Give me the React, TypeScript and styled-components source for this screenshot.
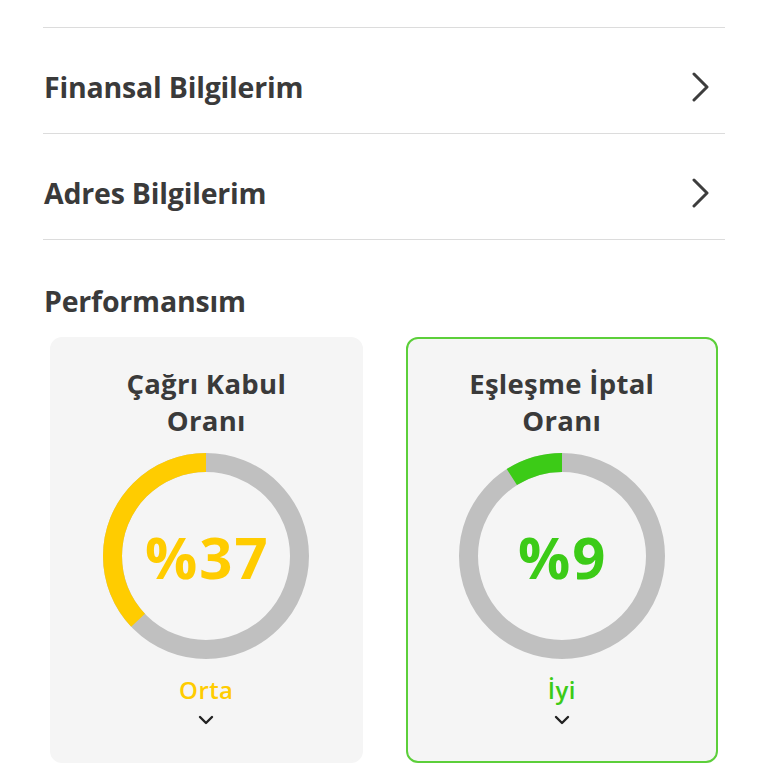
import styled, { createGlobalStyle } from "styled-components";

const GlobalStyle = createGlobalStyle`
  html, body {
    margin: 0;
    padding: 0;
    background: #ffffff;
  }
  body {
    font-family: "Open Sans", "Liberation Sans", sans-serif;
    color: #3a3a3a;
  }
`;

const Page = styled.div`
  width: 768px;
  height: 768px;
  overflow: hidden;
  box-sizing: border-box;
  padding: 27px 43px 0;
`;

const Menu = styled.ul`
  list-style: none;
  margin: 0;
  padding: 0;
  border-top: 1.5px solid #dcdcdc;
`;

const MenuRow = styled.li`
  height: 106px;
  box-sizing: border-box;
  display: flex;
  align-items: center;
  justify-content: space-between;
  border-bottom: 1.5px solid #dcdcdc;
  padding: 13px 14px 0 1px;
  cursor: pointer;
`;

const RowLabel = styled.span`
  font-size: 28.5px;
  font-weight: 700;
  letter-spacing: -0.2px;
  color: #3a3a3a;
`;

const SectionTitle = styled.h2`
  margin: 0;
  padding: 41px 0 0 1px;
  height: 56px;
  font-size: 28.5px;
  font-weight: 700;
  letter-spacing: -0.2px;
  color: #3a3a3a;
  line-height: 40px;
  box-sizing: content-box;
`;

const Cards = styled.div`
  display: grid;
  grid-template-columns: 1fr 1fr;
  gap: 43px;
  padding: 0 7px;
`;

const Card = styled.div<{ $active?: boolean }>`
  height: 426px;
  box-sizing: border-box;
  border-radius: 12px;
  background: #f5f5f5;
  border: 2px solid ${(p) => (p.$active ? "#5ccf3a" : "#f5f5f5")};
  display: flex;
  flex-direction: column;
  align-items: center;
  padding-top: 26px;
`;

const CardTitle = styled.div`
  font-size: 27.5px;
  font-weight: 700;
  line-height: 37px;
  letter-spacing: 0.3px;
  text-align: center;
  color: #3a3a3a;
`;

const Gauge = styled.div`
  position: relative;
  width: 206px;
  height: 206px;
  margin-top: 14px;
`;

const GaugeValue = styled.div<{ $color: string }>`
  position: absolute;
  inset: 0;
  display: flex;
  align-items: center;
  justify-content: center;
  padding-left: 2px;
  font-size: 58px;
  font-weight: 700;
  letter-spacing: 2px;
  color: ${(p) => p.$color};
`;

const Level = styled.div<{ $color: string }>`
  margin-top: 16px;
  font-size: 24px;
  font-weight: 600;
  line-height: 30px;
  letter-spacing: 0.4px;
  color: ${(p) => p.$color};
`;

const Toggle = styled.div`
  margin-top: 10px;
  display: flex;
`;

const ChevronRight = () => (
  <svg width="20" height="30" viewBox="0 0 20 30" fill="none">
    <path
      d="M3 2 L16 15 L3 28"
      stroke="#3d3d3d"
      strokeWidth="3"
      strokeLinecap="round"
      strokeLinejoin="round"
    />
  </svg>
);

const ChevronDown = () => (
  <svg width="16" height="10" viewBox="0 0 16 10" fill="none">
    <path
      d="M2 2 L8 8 L14 2"
      stroke="#222"
      strokeWidth="2.4"
      strokeLinecap="round"
      strokeLinejoin="round"
    />
  </svg>
);

const RADIUS = 93.5;
const CIRC = 2 * Math.PI * RADIUS;

function Donut({ value, color }: { value: number; color: string }) {
  const filled = (value / 100) * CIRC;
  return (
    <svg width="206" height="206" viewBox="0 0 206 206">
      <circle cx="103" cy="103" r={RADIUS} fill="none" stroke="#c0c0c0" strokeWidth="19" />
      <circle
        cx="103"
        cy="103"
        r={RADIUS}
        fill="none"
        stroke={color}
        strokeWidth="19"
        strokeDasharray={`${filled} ${CIRC}`}
        transform="scale(-1,1) translate(-206,0) rotate(-90 103 103)"
      />
    </svg>
  );
}

const metrics = [
  { title: ["Çağrı Kabul", "Oranı"], value: 37, level: "Orta", color: "#ffcc00", active: false },
  { title: ["Eşleşme İptal", "Oranı"], value: 9, level: "İyi", color: "#3ccb17", active: true },
];

export default function App() {
  return (
    <Page>
      <GlobalStyle />
      <Menu>
        <MenuRow>
          <RowLabel>Finansal Bilgilerim</RowLabel>
          <ChevronRight />
        </MenuRow>
        <MenuRow>
          <RowLabel>Adres Bilgilerim</RowLabel>
          <ChevronRight />
        </MenuRow>
      </Menu>
      <SectionTitle>Performansım</SectionTitle>
      <Cards>
        {metrics.map((m) => (
          <Card key={m.level} $active={m.active}>
            <CardTitle>
              {m.title[0]}
              <br />
              {m.title[1]}
            </CardTitle>
            <Gauge>
              <Donut value={m.value} color={m.color} />
              <GaugeValue $color={m.color}>%{m.value}</GaugeValue>
            </Gauge>
            <Level $color={m.color}>{m.level}</Level>
            <Toggle>
              <ChevronDown />
            </Toggle>
          </Card>
        ))}
      </Cards>
    </Page>
  );
}
